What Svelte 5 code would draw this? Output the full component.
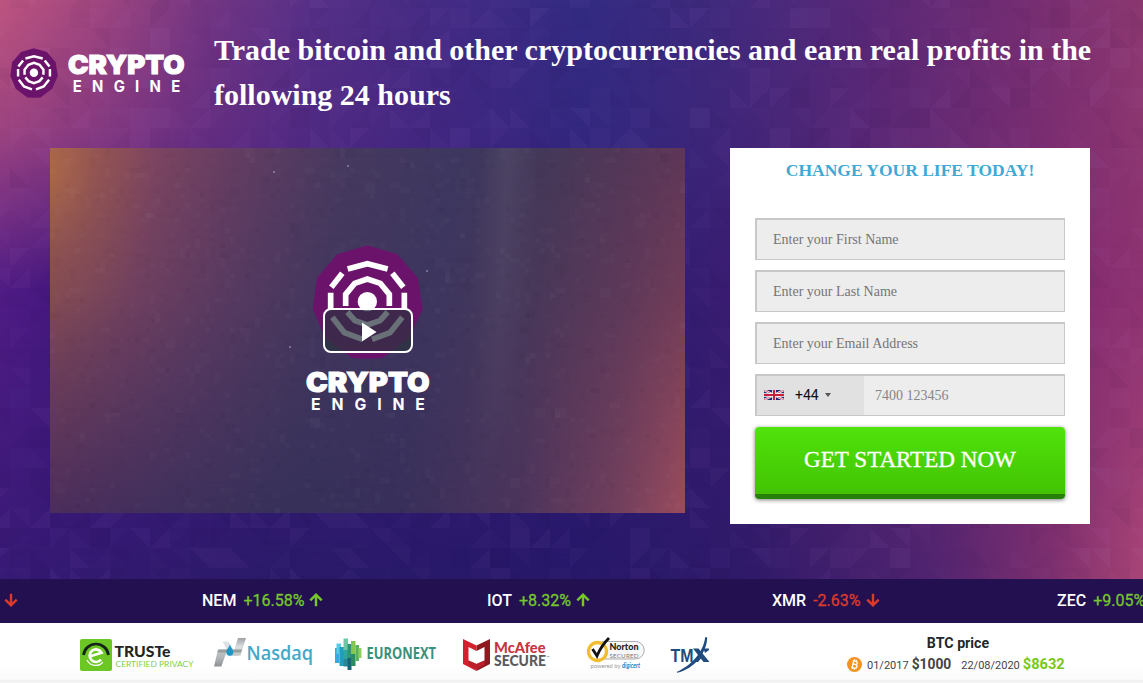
<script>
  function random(seed) {
    let s = seed;
    return () => {
      s = (s * 16807) % 2147483647;
      return s / 2147483647;
    };
  }

  // Low-contrast triangles on a 20px grid
  const r1 = random(4211);
  const triangles = [];
  for (let y = -12; y < 580; y += 20) {
    for (let x = -10; x < 1143; x += 20) {
      const k = Math.floor(r1() * 6);
      const a = r1();
      const light = r1() > 0.35;
      const x2 = x + 20;
      const y2 = y + 20;
      const shapes = [
        `M${x} ${y}H${x2}L${x} ${y2}Z`,
        `M${x2} ${y}V${y2}H${x}Z`,
        `M${x} ${y}V${y2}H${x2}Z`,
        `M${x} ${y}H${x2}V${y2}Z`,
        `M${x} ${y}H${x2}V${y2}H${x}Z`,
      ];
      if (k < 5) triangles.push({ d: shapes[k], fill: light ? '#d9a0ff' : '#100030', o: (a * 0.048).toFixed(3) });
    }
  }

  // Grain of the video poster
  const r2 = random(977);
  const grain = Array.from({ length: 1500 }, () => ({
    x: Math.floor(r2() * 127) * 5,
    y: Math.floor(r2() * 73) * 5,
    w: r2() > 0.8 ? 10 : 5,
    h: r2() > 0.8 ? 10 : 5,
    fill: r2() > 0.5 ? '#fff' : '#000',
    o: (0.005 + r2() * 0.02).toFixed(3),
  }));
  const specks = [[224, 24], [298, 18], [377, 123], [240, 199]];

  const coins = [
    { name: 'NEM', change: '+16.58%', up: true },
    { name: 'IOT', change: '+8.32%', up: true },
    { name: 'XMR', change: '-2.63%', up: false },
    { name: 'ZEC', change: '+9.05%', up: true },
  ];

  const fields = ['Enter your First Name', 'Enter your Last Name', 'Enter your Email Address'];
</script>

{#snippet emblem(cls)}
  <svg class={cls} viewBox="66 45 333 342" preserveAspectRatio="none" aria-hidden="true">
    <polygon fill="#6b136b" points="232,46 322,73 383,143 398,237 358,324 278,384 232,386 186,384 106,324 68,237 81,143 142,73" />
    <g fill="none" stroke="#fff" stroke-width="17">
      <path d="M173 117L232 101L293 117M124 172L157 130M307 130L340 172M122 188V240M343 188V240" />
      <path d="M167 228V193L194 160L232 147L271 160L298 193V228" />
      <path d="M172 246L195 272L232 285L270 272L293 246" />
      <path d="M127 262L163 308L218 328M246 328L300 308L337 262" />
    </g>
    <circle cx="232" cy="215" r="29" fill="#fff" />
  </svg>
{/snippet}

{#snippet wordmark(cls)}
  <svg class={cls} viewBox="0 0 124 40" preserveAspectRatio="none">
    <g fill="#fff" font-family="Inter, sans-serif">
      <text x="0" y="21" font-size="27" font-weight="900" textLength="123.5" lengthAdjust="spacingAndGlyphs" stroke="#fff" stroke-width="1.1">CRYPTO</text>
      <text x="5" y="38.8" font-size="16" font-weight="700" textLength="115.5" lengthAdjust="spacing" transform="translate(.2 0) scale(.985 1)">ENGINE</text>
    </g>
  </svg>
{/snippet}

{#snippet arrow(up)}
  <svg class="arrow" class:up viewBox="0 0 14 14" aria-hidden="true">
    <path d="M7 .8V12M1.3 6.6L7 12.3L12.7 6.6" fill="none" stroke="currentColor" stroke-width="2.4" />
  </svg>
{/snippet}

<div class="page">
  <section class="hero">
    <div class="wash low"></div>
    <div class="wash mid"></div>
    <div class="wash top"></div>
    <svg class="pattern" viewBox="0 0 1143 579" aria-hidden="true">
      {#each triangles as t}<path d={t.d} fill={t.fill} opacity={t.o} />{/each}
    </svg>

    <header>
      <div class="brand">
        {@render emblem('brand-emblem')}
        {@render wordmark('brand-word')}
      </div>
      <h1>Trade bitcoin and other cryptocurrencies and earn real profits in the<br />following 24 hours</h1>
    </header>

    <main>
      <div class="video">
        <div class="shade shade-low"></div>
        <div class="shade shade-top"></div>
        <svg class="grain" viewBox="0 0 635 365" aria-hidden="true">
          {#each grain as g}<rect x={g.x} y={g.y} width={g.w} height={g.h} fill={g.fill} opacity={g.o} />{/each}
          {#each specks as [x, y]}<circle cx={x} cy={y} r="1" fill="#c9c3e6" opacity=".55" />{/each}
        </svg>
        <div class="poster">
          {@render emblem('poster-emblem')}
          {@render wordmark('poster-word')}
        </div>
        <button class="play" aria-label="Play">
          <svg viewBox="0 0 15 20" width="15" height="20"><path d="M0 .5L14.5 10L0 19.5Z" fill="#fff" /></svg>
        </button>
      </div>

      <form onsubmit={(e) => e.preventDefault()}>
        <h2>CHANGE YOUR LIFE TODAY!</h2>
        {#each fields as f}<input placeholder={f} />{/each}
        <div class="phone">
          <div class="dial">
            <svg class="flag" viewBox="0 0 20 10" preserveAspectRatio="none">
              <rect width="20" height="10" fill="#1f2a72" />
              <path d="M0 0L20 10M20 0L0 10" stroke="#fff" stroke-width="2.2" />
              <path d="M0 0L20 10M20 0L0 10" stroke="#d0354b" stroke-width=".8" />
              <path d="M10 0V10M0 5H20" stroke="#fff" stroke-width="3.6" />
              <path d="M10 0V10M0 5H20" stroke="#cc1d3b" stroke-width="2" />
            </svg>
            <span>+44</span>
            <i></i>
          </div>
          <input type="tel" placeholder="7400 123456" />
        </div>
        <button class="cta">GET STARTED NOW</button>
      </form>
    </main>
  </section>

  <section class="ticker">
    <div class="coin lead down">{@render arrow(false)}</div>
    {#each coins as c}
      <div class="coin" class:down={!c.up}>
        <b>{c.name}</b><span>{c.change}</span>{@render arrow(c.up)}
      </div>
    {/each}
  </section>

  <footer>
    <svg class="logos" viewBox="0 0 640 60" width="640" height="60">
      <defs>
        <linearGradient id="silver" x1="0" y1="0" x2="0" y2="1">
          <stop offset="0" stop-color="#c4c8ca" /><stop offset=".5" stop-color="#b1b5b8" /><stop offset="1" stop-color="#8d9194" />
        </linearGradient>
        <linearGradient id="silver-up" x1="0" y1="0" x2="0" y2="1">
          <stop offset="0" stop-color="#9da1a4" /><stop offset=".5" stop-color="#dcdfe0" /><stop offset="1" stop-color="#c0c4c6" />
        </linearGradient>
      </defs>

      <g>
        <rect x="5" y="16" width="32" height="32" rx="2" fill="#6cc724" />
        <path d="M8.5 32A12.6 12.6 0 0 1 33.5 32" fill="none" stroke="#16231c" stroke-width="2.7" />
        <path d="M14.5 33.5L26.5 29.7A6.3 6.3 0 1 0 26 36.5" fill="none" stroke="#fff" stroke-width="2.7" />
        <path d="M12 37A9.6 9.6 0 0 0 28 39" fill="none" stroke="#fff" stroke-width="1.3" />
        <text x="39.5" y="34" font-family="Lato" font-weight="900" font-size="15.2" textLength="56" lengthAdjust="spacingAndGlyphs" fill="#242424">TRUSTe</text>
        <text x="40.5" y="43.8" font-family="Lato" font-size="8.2" textLength="78" lengthAdjust="spacingAndGlyphs" fill="#7ed044">CERTIFIED PRIVACY</text>
      </g>

      <g>
        <path d="M147.5 18.5H153.5L158.5 27H166L163.5 33H157L152 27Z" fill="#dfe2e4" />
        <path d="M143 26.5H152.5L146.3 43.5H139Z" fill="url(#silver)" />
        <path d="M163 15H171L165.5 32.5H157.5Z" fill="url(#silver-up)" />
        <path d="M143.5 26.5H167L166 29.5H142.3Z" fill="#989da0" />
        <path d="M154.8 21.5C156 25 159 27 158.2 30.5C157.5 33.6 152.3 33.6 151.5 30.5C150.7 27 153.8 25 154.8 21.5Z" fill="#1d96c4" />
        <text x="171.5" y="36.8" font-family="Open Sans" font-weight="600" font-size="20" textLength="66.5" lengthAdjust="spacingAndGlyphs" fill="#43a8c9">Nasdaq</text>
      </g>

      <g>
        <path d="M260 25H264.5V40H260Z" fill="#35a9e8" />
        <path d="M261.5 20.5H266V31H261.5Z" fill="#58cbe4" />
        <path d="M264.5 24H269V43H264.5Z" fill="#1e9fc0" />
        <path d="M268.5 15.5H273V28H268.5Z" fill="#6cc7a8" />
        <path d="M268.5 27H273V37H268.5Z" fill="#2fa59b" />
        <path d="M272.5 21H276.5V36H272.5Z" fill="#2e9477" />
        <path d="M268.5 36H273V43.5H268.5Z" fill="#2a8697" />
        <path d="M272.5 35H276.5V47H272.5Z" fill="#176577" />
        <path d="M276 18H280.5V32H276Z" fill="#84c74c" />
        <path d="M276 31H280.5V43H276Z" fill="#2b8e63" />
        <path d="M280.5 22H284V38H280.5Z" fill="#57b45b" />
        <path d="M283.5 25H286.5V35H283.5Z" fill="#92cf62" />
        <text x="291.5" y="36.2" font-family="Open Sans" font-weight="700" font-size="15.2" textLength="69.5" lengthAdjust="spacingAndGlyphs" fill="#39907d">EURONEXT</text>
      </g>

      <g>
        <path d="M388 16L401.5 22.5V28L393.5 24V37.5L401.5 41V48L388 41Z" fill="#d3222d" />
        <path d="M415 16L401.5 22.5V28L409.5 24V37.5L401.5 41V48L415 41Z" fill="#8e1a20" />
        <path d="M393.5 37.5L401.5 41L409.5 37.5V42L401.5 46.3L393.5 42Z" fill="#bb202a" />
        <text x="419" y="29.5" font-family="Lato" font-weight="900" font-size="15.2" textLength="51.5" lengthAdjust="spacingAndGlyphs" fill="#c9343f">McAfee</text>
        <text x="419" y="42.8" font-family="Lato" font-weight="900" font-size="15" textLength="52" lengthAdjust="spacingAndGlyphs" fill="#5a5a5c">SECURE</text>
        <text x="471.5" y="36" font-family="Lato" font-size="4" fill="#666">™</text>
      </g>

      <g>
        <path d="M527 18.5H560.5A8.5 8.5 0 0 1 560.5 36H527" fill="#f8f8f8" stroke="#aaa" stroke-width="1" />
        <circle cx="522.5" cy="28.5" r="9" fill="#fff" stroke="#f1bd31" stroke-width="3.3" />
        <path d="M517.5 26L522 33Q526 23 534 15" fill="none" stroke="#111" stroke-width="2.8" />
        <text x="534.5" y="27.4" font-family="Lato" font-weight="900" font-size="9" textLength="29" lengthAdjust="spacingAndGlyphs" fill="#222">Norton</text>
        <text x="534.5" y="34.6" font-family="Lato" font-size="6.2" textLength="29" lengthAdjust="spacing" fill="#777">SECURED</text>
        <text x="515.5" y="44.8" font-family="Lato" font-size="6.3" textLength="30" lengthAdjust="spacingAndGlyphs" fill="#999">powered by</text>
        <text x="547" y="44.8" font-family="Lato" font-weight="700" font-style="italic" font-size="6.6" textLength="18" lengthAdjust="spacingAndGlyphs" fill="#2581c8">digicert</text>
      </g>

      <g fill="#214b7d">
        <text x="595.5" y="38.5" font-family="Liberation Sans" font-weight="700" font-size="17.5" textLength="23" lengthAdjust="spacingAndGlyphs">TM</text>
        <path d="M618 25.5H623.5L634.5 39H628.5Z" />
        <path d="M630.2 14L632.2 14.5C632 29 620 46 602 49.8V48.8C615 43 628.5 30 630.2 14Z" />
        <path d="M618.5 39L625 31L628 33L623 39ZM628.5 25.5H634V27L630 30Z" />
      </g>
    </svg>

    <div class="btc">
      <strong>BTC price</strong>
      <div class="prices">
        <svg width="15" height="15" viewBox="0 0 15 15">
          <circle cx="7.5" cy="7.5" r="7.5" fill="#f7931a" />
          <g transform="rotate(13 7.5 7.5)" fill="none" stroke="#fff" stroke-width="1.3">
            <path d="M5 4H8.3A1.65 1.65 0 0 1 8.3 7.3H5.8M8.5 7.3A1.85 1.85 0 0 1 8.5 11H5M5.9 4V11M6.6 2.5V4M8.4 2.5V4M6.6 11V12.5M8.4 11V12.5" />
          </g>
        </svg>
        <span class="date">01/2017</span><b>$1000</b>
        <span class="date second">22/08/2020</span><b class="now">$8632</b>
      </div>
    </div>
  </footer>
</div>

<style>
  :global(body) { overflow: hidden; }
  * { box-sizing: border-box; }
  .page {
    width: 1143px;
    height: 683px;
    display: flex;
    flex-direction: column;
    overflow: hidden;
    font-family: Roboto, sans-serif;
    background: #fff;
  }
  .hero {
    position: relative;
    height: 579px;
    flex: none;
    overflow: hidden;
  }
  .wash, .pattern { position: absolute; inset: 0; width: 100%; height: 100%; }
  .low { background: linear-gradient(90deg, #371a75 0%, #2a1a69 25%, #27186a 50%, #2f1a69 65%, #522470 82%, #7d306f 92%, #a94577 100%); }
  .mid {
    background: linear-gradient(90deg, #501c85 0%, #45187f 5%, #3d1b78 30%, #301f74 55%, #391c70 64%, #6c2a70 85%, #862c70 95%, #8d3272 100%);
    -webkit-mask-image: linear-gradient(#000 0%, #000 50%, transparent 100%);
    mask-image: linear-gradient(#000 0%, #000 50%, transparent 100%);
  }
  .top {
    background: linear-gradient(90deg, #bd547e 0%, #a2477f 8%, #743683 18%, #573087 27%, #422b84 40%, #332b83 51%, #3f2a7d 62%, #572878 75%, #752d71 90%, #8c3870 100%);
    -webkit-mask-image: linear-gradient(#000 0%, rgba(0,0,0,.72) 22%, transparent 50%);
    mask-image: linear-gradient(#000 0%, rgba(0,0,0,.72) 22%, transparent 50%);
  }
  header {
    position: relative;
    display: flex;
    height: 148px;
    padding: 27px 0 0 10px;
  }
  .brand { display: flex; width: 204px; padding-top: 21px; flex: none; }
  .brand-emblem { width: 48px; height: 50px; }
  .brand-word { width: 117px; height: 39px; margin: 6px 0 0 9.5px; overflow: visible; }
  h1 {
    margin: 0;
    color: #fff;
    font: 700 30px/45px "Liberation Serif", serif;
    white-space: nowrap;
  }
  main {
    position: relative;
    display: flex;
    align-items: flex-start;
    justify-content: space-between;
    width: 1040px;
    margin-left: 50px;
  }
  .video { position: relative; width: 635px; height: 365px; overflow: hidden; }
  .shade, .grain { position: absolute; inset: 0; width: 100%; height: 100%; }
  .shade-low { background: linear-gradient(90deg, #4c2d5c 0%, #40305c 18%, #37315a 38%, #38305b 55%, #4c345c 74%, #74405d 90%, #9b4c5e 100%); }
  .shade-top {
    background:
      linear-gradient(93deg, transparent 65.5%, rgba(130,130,140,.16) 70%, transparent 75%),
      radial-gradient(ellipse 105px 190px at 0 25px, rgba(190,120,70,.6), rgba(175,105,70,.28) 45%, transparent),
      linear-gradient(97deg, #96544f 0%, #7e4560 15%, #653d62 27%, #47395f 43%, #3d375f 60%, #453858 74%, #573658 88%, #673756 100%);
    -webkit-mask-image: linear-gradient(#000 0%, rgba(0,0,0,.75) 40%, transparent 100%);
    mask-image: linear-gradient(#000 0%, rgba(0,0,0,.75) 40%, transparent 100%);
  }
  .poster {
    position: relative;
    display: flex;
    flex-direction: column;
    align-items: center;
    padding-top: 97px;
  }
  .poster-emblem { width: 111px; height: 114px; }
  .poster-word { width: 124px; height: 40px; margin-top: 12px; overflow: visible; }
  .play {
    position: absolute;
    left: 273px;
    top: 160px;
    width: 90px;
    height: 45px;
    display: flex;
    align-items: center;
    justify-content: center;
    padding: 2px 0 0 3px;
    border: 2px solid #fff;
    border-radius: 8px;
    background: rgba(43, 51, 63, .7);
  }
  form {
    width: 360px;
    height: 376px;
    padding: 12px 25px 0;
    background: #fff;
    display: flex;
    flex-direction: column;
  }
  h2 {
    height: 58px;
    margin: 0;
    color: #3fa9d5;
    text-align: center;
    font: 700 17.5px/21px "Liberation Serif", serif;
    white-space: nowrap;
  }
  input {
    width: 310px;
    height: 42px;
    margin: 0 0 10px;
    padding: 0 16px;
    border: 1px solid #c8c8c8;
    border-top-width: 2px;
    border-left-width: 2px;
    border-radius: 0;
    background: #ededed;
    font: 14px "Liberation Serif", serif;
    outline: none;
  }
  input::placeholder { color: #757575; opacity: 1; }
  .phone {
    display: flex;
    height: 42px;
    margin-bottom: 11px;
    border: 1px solid #c8c8c8;
    border-top-width: 2px;
    border-left-width: 2px;
    background: #ededed;
  }
  .phone input { flex: 1; width: 0; height: 39px; margin: 0; padding: 0 11px; border: 0; }
  .phone input::placeholder { color: #858585; }
  .dial {
    display: flex;
    align-items: center;
    width: 107px;
    padding: 0 0 2px 7px;
    background: #e1e1e1;
    font: 14px Roboto, sans-serif;
    color: #111;
  }
  .flag { width: 20px; height: 10px; margin-right: 11px; }
  .dial i {
    margin-left: 6px;
    border: 3px solid transparent;
    border-top: 4px solid #555;
    border-bottom: 0;
  }
  .cta {
    height: 72px;
    padding: 0 0 2px;
    border: 0;
    border-bottom: 5px solid #27800a;
    border-radius: 4px;
    background: linear-gradient(#4fe30c, #43c302);
    box-shadow: 0 1px 4px rgba(0,0,0,.5);
    color: #fff;
    font: 23.1px "Liberation Serif", serif;
    -webkit-text-stroke: .3px #fff;
  }
  .ticker {
    display: flex;
    height: 44px;
    flex: none;
    overflow: hidden;
    padding-bottom: 1px;
    background: #221051;
    font-size: 16px;
  }
  .coin {
    display: flex;
    align-items: center;
    width: 285px;
    flex: none;
    color: #76c72b;
  }
  .coin span { -webkit-text-stroke: .3px currentColor; }
  .coin.down { color: #dc3b2c; }
  .coin.lead { width: 202px; padding-left: 4px; }
  .coin b { color: #fff; font-weight: 500; margin-right: 7px; }
  .arrow { width: 14px; height: 14px; margin: 0 0 2px 5px; }
  .lead .arrow { margin-left: 0; }
  .arrow.up { transform: rotate(180deg); }
  footer {
    display: flex;
    height: 60px;
    flex: none;
    padding-left: 75px;
    background: linear-gradient(#fff 70%, #fafafa 94%, #f1f1f1 95%, #f5f5f5);
  }
  .logos { flex: none; }
  .btc {
    width: 230px;
    margin-left: 128px;
    padding-top: 11px;
    text-align: center;
    color: #24272b;
  }
  .btc strong { display: block; font-size: 14.2px; line-height: 18px; font-weight: 700; }
  .prices { display: flex; align-items: center; margin-left: 4px; height: 24px; white-space: nowrap; }
  .date { margin: 2px 3px 0 5px; font-size: 11px; color: #444; }
  .date.second { margin-left: 10px; }
  .prices b { font-size: 13.8px; color: #444; }
  .prices .now { font-size: 14.6px; color: #76c918; }
</style>
